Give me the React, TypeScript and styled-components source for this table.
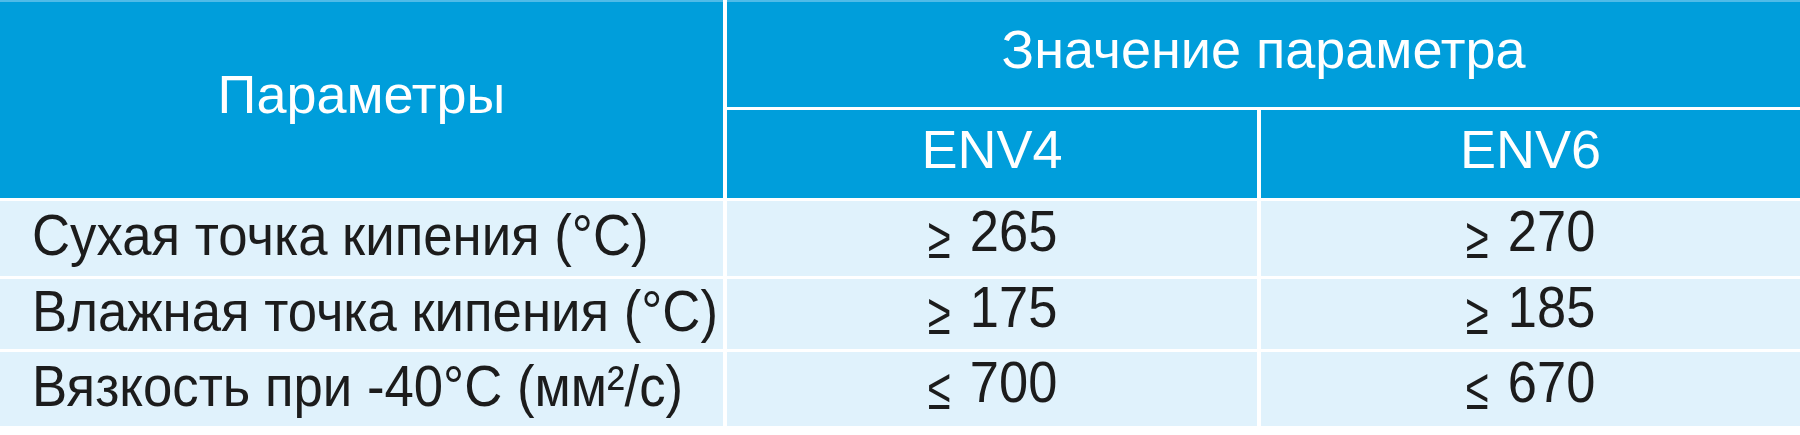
import React from 'react';
import styled, { createGlobalStyle } from 'styled-components';

const GlobalStyle = createGlobalStyle`
  html, body {
    margin: 0;
    padding: 0;
    background: #ffffff;
  }
  body {
    font-family: "Liberation Sans", Arial, sans-serif;
  }
`;

const rows = [
  { name: 'Сухая точка кипения (°С)', env4: ['≥', '265'], env6: ['≥', '270'] },
  { name: 'Влажная точка кипения (°С)', env4: ['≥', '175'], env6: ['≥', '185'] },
  { name: 'Вязкость при -40°С (мм²/с)', env4: ['≤', '700'], env6: ['≤', '670'] },
];

const Table = styled.div`
  display: grid;
  grid-template-columns: 723px 530px 1fr;
  grid-template-rows: 107px 88px 75px 70px 74px;
  column-gap: 4px;
  row-gap: 3px;
  width: 1800px;
  height: 435px;
  background: #ffffff;
`;

const HeadCell = styled.div<{ $rows?: number; $cols?: number; $top?: boolean }>`
  grid-row: span ${(p) => p.$rows || 1};
  grid-column: span ${(p) => p.$cols || 1};
  background: #009edb;
  box-shadow: ${(p) => (p.$top ? 'inset 0 2px 0 #4fbbe8' : 'none')};
  color: #ffffff;
  display: flex;
  align-items: center;
  justify-content: center;
  padding-bottom: 10px;
  box-sizing: border-box;
`;

const BodyCell = styled.div<{ $left?: boolean }>`
  background: #e0f2fc;
  color: #1c1c1c;
  display: flex;
  align-items: center;
  justify-content: ${(p) => (p.$left ? 'flex-start' : 'center')};
  padding: 0 0 6px ${(p) => (p.$left ? '32px' : '0')};
  box-sizing: border-box;
`;

const Label = styled.span<{ $size: number; $squeeze: number; $left?: boolean }>`
  display: inline-block;
  font-size: ${(p) => p.$size}px;
  line-height: 1;
  white-space: nowrap;
  transform: scaleX(${(p) => p.$squeeze});
  transform-origin: ${(p) => (p.$left ? 'left center' : 'center center')};
`;

// the ≥ / ≤ in the picture is narrow, tall and sits a bit under the baseline
const Sign = styled.span`
  display: inline-block;
  font-size: 1.02em;
  vertical-align: -0.12em;
  margin-right: 0.24em;
  transform: scaleX(0.78);
  transform-origin: left center;
`;

export default function App() {
  return (
    <>
      <GlobalStyle />
      <Table>
        <HeadCell $rows={2} $top>
          <Label $size={54} $squeeze={1}>Параметры</Label>
        </HeadCell>
        <HeadCell $cols={2} $top>
          <Label $size={54} $squeeze={1}>Значение параметра</Label>
        </HeadCell>
        <HeadCell>
          <Label $size={54} $squeeze={1}>ENV4</Label>
        </HeadCell>
        <HeadCell>
          <Label $size={54} $squeeze={1}>ENV6</Label>
        </HeadCell>
        {rows.map((r) => (
          <React.Fragment key={r.name}>
            <BodyCell $left>
              <Label $size={57} $squeeze={0.925} $left>{r.name}</Label>
            </BodyCell>
            <BodyCell>
              <Label $size={57} $squeeze={0.92}>
                <Sign>{r.env4[0]}</Sign>
                {r.env4[1]}
              </Label>
            </BodyCell>
            <BodyCell>
              <Label $size={57} $squeeze={0.92}>
                <Sign>{r.env6[0]}</Sign>
                {r.env6[1]}
              </Label>
            </BodyCell>
          </React.Fragment>
        ))}
      </Table>
    </>
  );
}
